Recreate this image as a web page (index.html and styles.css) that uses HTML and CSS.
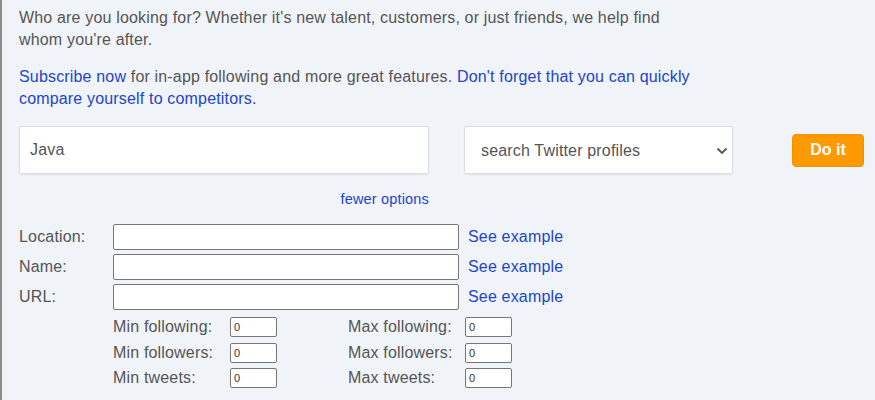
FILE: index.html
```html
<!DOCTYPE html>
<html lang="en">
<head>
<meta charset="utf-8">
<title>Search</title>
<link rel="stylesheet" href="styles.css">
</head>
<body>
<div class="page">
  <p class="intro">Who are you looking for? Whether it's new talent, customers, or just friends, we help find whom you're after.</p>
  <p class="intro sub"><a href="#">Subscribe now</a> for in-app following and more great features. <a href="#">Don't forget that you can quickly compare yourself to competitors.</a></p>

  <form class="search" onsubmit="return false">
    <div class="search-row">
      <input class="query" type="text" value="Java">
      <div class="select-wrap">
        <select class="kind">
          <option>search Twitter profiles</option>
        </select>
        <svg class="chev" width="12" height="8" viewBox="0 0 12 8"><path d="M1.5 1.5 L6 6 L10.5 1.5" fill="none" stroke="#555" stroke-width="1.8"/></svg>
      </div>
      <button class="go" type="submit">Do it</button>
    </div>
    <div class="fewer-row"><a href="#">fewer options</a></div>

    <div class="details">
      <label>Location:</label><input class="field" type="text"><a href="#">See example</a>
      <label>Name:</label><input class="field" type="text"><a href="#">See example</a>
      <label>URL:</label><input class="field" type="text"><a href="#">See example</a>
    </div>

    <div class="ranges">
      <span>Min following:</span><input class="num" type="text" value="0"><span class="max">Max following:</span><input class="num" type="text" value="0">
      <span>Min followers:</span><input class="num" type="text" value="0"><span class="max">Max followers:</span><input class="num" type="text" value="0">
      <span>Min tweets:</span><input class="num" type="text" value="0"><span class="max">Max tweets:</span><input class="num" type="text" value="0">
    </div>
  </form>
</div>
</body>
</html>
```

FILE: styles.css
```css
html, body {
  margin: 0;
  padding: 0;
}
body {
  background: #f0f4f9;
  font-family: "Liberation Sans", Arial, sans-serif;
  font-size: 16px;
  letter-spacing: 0.17px;
  color: #555;
}
.page {
  border-left: 2px solid #8c8c8c;
  padding: 7px 0 0 17px;
  min-height: 100vh;
  box-sizing: border-box;
}
a {
  color: #2244cc;
  text-decoration: none;
}
.intro {
  margin: 0;
  line-height: 22px;
  max-width: 680px;
}
.intro.sub {
  margin-top: 15px;
}
.search-row {
  display: flex;
  align-items: center;
  margin-top: 16px;
}
.query {
  box-sizing: border-box;
  width: 410px;
  height: 48px;
  border: 1px solid #dadee3;
  border-radius: 2px;
  box-shadow: 0 1px 2px rgba(0,0,0,0.07);
  background: #fff;
  padding: 0 0 0 10px;
  font: 16px "Liberation Sans", Arial, sans-serif;
  letter-spacing: 0.17px;
  color: #555;
  outline: none;
}
.select-wrap {
  position: relative;
  margin-left: 35px;
  width: 269px;
  height: 48px;
}
.kind {
  appearance: none;
  -webkit-appearance: none;
  box-sizing: border-box;
  width: 100%;
  height: 100%;
  border: 1px solid #dadee3;
  border-radius: 2px;
  box-shadow: 0 1px 2px rgba(0,0,0,0.07);
  background: #fff;
  padding: 0 0 0 16px;
  font: 16px "Liberation Sans", Arial, sans-serif;
  letter-spacing: 0.17px;
  color: #555;
  outline: none;
}
.chev {
  position: absolute;
  right: 5px;
  top: 21px;
  pointer-events: none;
}
.go {
  margin-left: 59px;
  width: 72px;
  height: 33px;
  border: 1px solid #f39100;
  border-radius: 4px;
  background: #ff9900;
  color: #fff;
  font: bold 16px "Liberation Sans", Arial, sans-serif;
  padding: 0;
}
.fewer-row {
  width: 410px;
  text-align: right;
  margin-top: 16px;
  font-size: 14.5px;
  line-height: 18px;
}
.details {
  display: grid;
  grid-template-columns: 94px 346px auto;
  row-gap: 4px;
  align-items: center;
  justify-items: start;
  margin-top: 16px;
}
.details a {
  margin-left: 9px;
}
.field {
  box-sizing: border-box;
  width: 346px;
  height: 26px;
  border: 1px solid #767676;
  border-radius: 2px;
  background: #fff;
  margin: 0;
}
.ranges {
  display: grid;
  grid-template-columns: 117px 47px 71px 117px 47px;
  grid-auto-rows: 20px;
  row-gap: 5.5px;
  align-items: center;
  margin: 7px 0 0 94px;
}
.ranges .max {
  grid-column: 4;
}
.num {
  box-sizing: border-box;
  width: 47px;
  height: 20px;
  border: 1px solid #767676;
  border-radius: 2px;
  background: #fff;
  padding: 0 0 0 3px;
  font: 11px "Liberation Sans", Arial, sans-serif;
  color: #333;
  margin: 0;
}
```
